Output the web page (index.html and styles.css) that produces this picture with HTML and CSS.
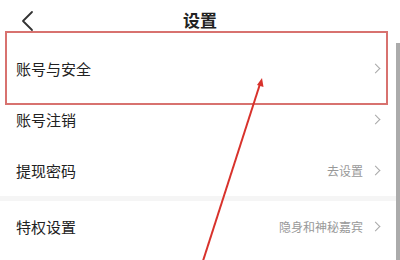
FILE: index.html
```
<!DOCTYPE html>
<html lang="zh-CN">
<head>
    <meta charset="UTF-8">
    <meta name="viewport" content="width=device-width, initial-scale=1.0">
    <title>设置</title>
    <link rel="stylesheet" href="styles.css">
</head>
<body>
    <div class="page">
        <div class="header">
            <svg class="back" width="14" height="22" viewBox="0 0 14 22">
                <polyline points="11,2 2,11 11,20" fill="none" stroke="#333" stroke-width="1.8" stroke-linecap="round" stroke-linejoin="round"/>
            </svg>
            <h1>设置</h1>
        </div>
        <div class="content">
            <div class="list">
                <div class="row">
                    <span class="label">账号与安全</span>
                    <span class="value"><i class="arrow"></i></span>
                </div>
                <div class="row">
                    <span class="label">账号注销</span>
                    <span class="value"><i class="arrow"></i></span>
                </div>
                <div class="row">
                    <span class="label">提现密码</span>
                    <span class="value">去设置<i class="arrow"></i></span>
                </div>
                <div class="gap"></div>
                <div class="row">
                    <span class="label">特权设置</span>
                    <span class="value">隐身和神秘嘉宾<i class="arrow"></i></span>
                </div>
            </div>
            <div class="scrollbar"></div>
        </div>

        <!-- annotation drawn over the screenshot -->
        <div class="highlight"></div>
        <svg class="pointer" width="400" height="260" viewBox="0 0 400 260">
            <line x1="260" y1="84" x2="202" y2="264" stroke="#d8322c" stroke-width="2"/>
            <polygon points="262,78 263.5,87 257,85" fill="#d8322c"/>
        </svg>
    </div>
</body>
</html>
```
FILE: styles.css
```
body {
    margin: 0;
    font-family: "Noto Sans CJK SC", "Noto Sans", sans-serif;
    background: #ffffff;
    color: #222;
}
.page {
    position: relative;
    width: 400px;
    height: 260px;
    overflow: hidden;
}
.header {
    height: 43px;
    display: flex;
    align-items: center;
    justify-content: center;
    position: relative;
}
.header h1 {
    margin: 0;
    font-size: 17px;
    font-weight: bold;
    color: #222;
    margin-top: -4px;
}
.back {
    position: absolute;
    left: 21px;
    top: 10px;
}
.content {
    display: flex;
}
.list {
    flex: 1;
}
.scrollbar {
    width: 4px;
    height: 217px;
    background: #ababab;
}
.row {
    height: 51px;
    display: flex;
    align-items: center;
    justify-content: space-between;
    padding: 0 15px 0 16px;
}
.label {
    font-size: 15px;
    color: #222;
}
.value {
    display: flex;
    align-items: center;
    font-size: 12px;
    color: #999;
}
.arrow {
    display: inline-block;
    width: 6px;
    height: 6px;
    border-top: 1.3px solid #a8a8a8;
    border-right: 1.3px solid #a8a8a8;
    transform: rotate(45deg);
    margin-left: 9px;
    margin-right: 2px;
}
.gap {
    height: 5px;
    background: #f5f5f5;
}
.highlight {
    position: absolute;
    left: 5px;
    top: 31px;
    width: 379px;
    height: 70px;
    border: 2px solid #d8726f;
}
.pointer {
    position: absolute;
    left: 0;
    top: 0;
}
```
